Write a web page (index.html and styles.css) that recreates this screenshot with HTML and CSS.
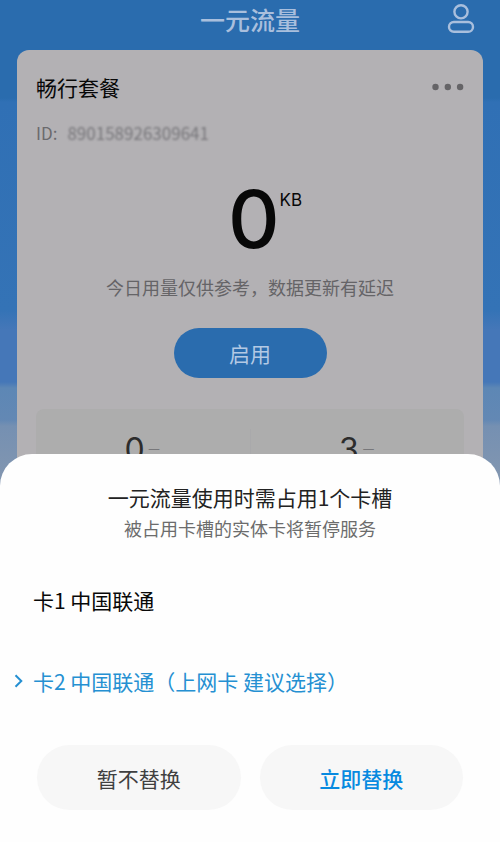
FILE: index.html
```html
<!DOCTYPE html>
<html lang="zh-CN">
<head>
<meta charset="utf-8">
<meta name="viewport" content="width=device-width, initial-scale=1">
<title>一元流量</title>
<link rel="stylesheet" href="styles.css">
</head>
<body>
<div class="page">
  <header class="topbar">
    <h1 class="topbar-title">一元流量</h1>
    <button class="icon-button" type="button" aria-label="我的">
      <svg width="28" height="32" viewBox="0 0 28 32" fill="none" stroke="currentColor" stroke-width="2.4">
        <circle cx="14" cy="8.8" r="6.6"/>
        <rect x="2" y="19" width="24" height="9.8" rx="4.9"/>
      </svg>
    </button>
  </header>
  <main class="card">
    <div class="card-head">
      <h2 class="card-title">畅行套餐</h2>
      <button class="icon-button more" type="button" aria-label="更多">
        <svg width="32" height="8" viewBox="0 0 32 8" fill="currentColor">
          <circle cx="3.5" cy="4" r="3.2"/><circle cx="15.8" cy="4" r="3.2"/><circle cx="28.1" cy="4" r="3.2"/>
        </svg>
      </button>
    </div>
    <p class="card-id">ID: <span class="masked">890158926309641</span></p>
    <p class="usage"><span class="usage-value">0</span><span class="usage-unit">KB</span></p>
    <p class="hint">今日用量仅供参考，数据更新有延迟</p>
    <button class="enable" type="button">启用</button>
    <div class="stats">
      <p class="stat">0<span class="stat-unit">元</span></p>
      <p class="stat">3<span class="stat-unit">元</span></p>
    </div>
  </main>
</div>
<section class="sheet" role="dialog" aria-labelledby="sheet-title">
  <h2 class="sheet-title" id="sheet-title">一元流量使用时需占用1个卡槽</h2>
  <p class="sheet-note">被占用卡槽的实体卡将暂停服务</p>
  <div class="options">
    <button class="option" type="button">卡1 中国联通</button>
    <button class="option selected" type="button">
      <svg class="chevron" width="10" height="14" viewBox="0 0 10 14" fill="none" stroke="currentColor" stroke-width="2"><path d="M1.5 1.2 7.3 7 1.5 12.8"/></svg>
      卡2 中国联通（上网卡 建议选择）
    </button>
  </div>
  <div class="actions">
    <button class="action" type="button">暂不替换</button>
    <button class="action primary" type="button">立即替换</button>
  </div>
</section>
</body>
</html>
```
FILE: styles.css
```css
* {
  box-sizing: border-box;
}

body,
h1,
h2,
p {
  margin: 0;
}

body {
  font-family: "Noto Sans CJK SC", sans-serif;
  font-size: 21px;
  color: #080808;
}

button {
  border: 0;
  padding: 0;
  background: none;
  color: inherit;
  font: inherit;
}

svg {
  display: block;
}

.page {
  display: flex;
  flex-direction: column;
  height: 100vh;
  overflow: hidden;
  background: linear-gradient(#2a6cae 0, #2a6cae 98px, #3070b5 102px, #3473b6 310px, #4577b8 330px, #4577b8 382px, #5d87b5 388px, #6388b4 420px, #7590b2 426px, #8296b0 480px);
}

.topbar {
  display: grid;
  grid-template-columns: 1fr auto 1fr;
  align-items: center;
  height: 50px;
  padding: 0 25px 12px;
  color: #a9bfdd;
}

.topbar-title {
  grid-column: 2;
  font-size: 25px;
  line-height: 36px;
  font-weight: 500;
}

.topbar .icon-button {
  justify-self: end;
}

.card {
  flex: 1;
  display: flex;
  flex-direction: column;
  margin: 0 17px;
  padding: 19px 19px 20px;
  border-radius: 12px 12px 0 0;
  background: #b3b1b4;
}

.card-head {
  display: flex;
  justify-content: space-between;
  align-items: center;
}

.card-title {
  font-size: 21px;
  line-height: 36px;
  font-weight: 400;
}

.more {
  color: #656467;
}

.card-id {
  display: flex;
  gap: 10px;
  margin-top: 15px;
  font-size: 17px;
  line-height: 26px;
  color: #6b6a6d;
}

.masked {
  color: #77767a;
  filter: blur(1px);
}

.usage {
  display: flex;
  justify-content: center;
  align-items: flex-start;
  margin-top: 28px;
  padding-left: 30px;
  font-family: Inter, sans-serif;
}

.usage-value {
  font-size: 80px;
  line-height: 90px;
  font-weight: 500;
}

.usage-unit {
  padding-top: 16px;
  font-size: 17px;
  line-height: 20px;
}

.hint {
  margin-top: 9px;
  font-size: 18px;
  line-height: 28px;
  text-align: center;
  color: #656467;
}

.enable {
  align-self: center;
  width: 153px;
  height: 50px;
  margin-top: 27px;
  border-radius: 25px;
  background: #2a6cae;
  color: #b3c9e4;
}

.stats {
  display: grid;
  grid-template-columns: 1fr 1fr;
  margin-top: 31px;
  padding: 20px 0;
  border-radius: 8px;
  background: #adadad;
}

.stat {
  display: flex;
  justify-content: center;
  align-items: baseline;
  gap: 2px;
  font-family: Inter, sans-serif;
  font-size: 32px;
  line-height: 42px;
  color: #2c2c2c;
}

.stat + .stat {
  border-left: 1px solid #a9a9ab;
}

.stat-unit {
  font-family: "Noto Sans CJK SC", sans-serif;
  font-size: 15px;
  color: #77777a;
}

.sheet {
  position: fixed;
  right: 0;
  bottom: 0;
  left: 0;
  padding: 27px 37px 32px;
  border-radius: 32px 32px 0 0;
  background: #fefefe;
}

.sheet-title {
  font-size: 21px;
  line-height: 32px;
  font-weight: 400;
  text-align: center;
  color: #222222;
}

.sheet-note {
  font-size: 18px;
  line-height: 30px;
  text-align: center;
  color: #6c6c6c;
}

.options {
  display: grid;
  gap: 41px;
  margin: 37px -37px 44px;
}

.option {
  display: flex;
  align-items: center;
  min-height: 40px;
  padding: 0 33px;
  text-align: left;
}

.option.selected {
  padding-left: 14px;
  color: #2590d2;
}

.chevron {
  margin-right: 9px;
}

.actions {
  display: grid;
  grid-template-columns: 1fr 1fr;
  gap: 19px;
}

.action {
  height: 65px;
  border-radius: 33px;
  background: #f7f7f7;
  color: #404040;
}

.action.primary {
  color: #078ae0;
  font-weight: 500;
}
```
